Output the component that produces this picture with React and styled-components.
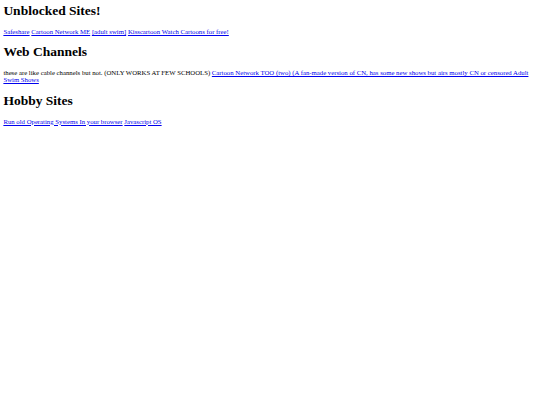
import React from "react";
import styled, { createGlobalStyle } from "styled-components";

// The page is drawn at 0.421875 of a 1280px-wide layout.
const S = 0.421875;
const px = (v) => `${v * S}px`;

const Global = createGlobalStyle`
  html, body { background: #fff; }
  body {
    margin: ${px(8)};
    font-family: "Liberation Serif", "Times New Roman", serif;
    font-size: ${px(16)};
    color: #000;
  }
`;

const Heading = styled.h1`
  font-size: ${px(32)};
  font-weight: bold;
  margin: ${(p) => (p.$first ? 0 : px(21.44))} 0 ${px(21.44)};
`;

const Para = styled.p`
  margin: ${px(16)} 0;
`;

const Link = styled.a`
  color: #0000ee;
  text-decoration: underline;
`;

const sections = [
  {
    title: "Unblocked Sites!",
    intro: null,
    links: [
      "Safeshare",
      "Cartoon Network ME",
      "[adult swim]",
      "Kisscartoon Watch Cartoons for free!",
    ],
  },
  {
    title: "Web Channels",
    intro: "these are like cable channels but not. (ONLY WORKS AT FEW SCHOOLS)",
    links: [
      "Cartoon Network TOO (two) (A fan-made version of CN, has some new shows but airs mostly CN or censored Adult Swim Shows",
    ],
  },
  {
    title: "Hobby Sites",
    intro: null,
    links: ["Run old Operating Systems In your browser", "Javascript OS"],
  },
];

export default function App() {
  return (
    <>
      <Global />
      {sections.map((s, i) => (
        <React.Fragment key={s.title}>
          <Heading $first={i === 0}>{s.title}</Heading>
          <Para>
            {s.intro && <>{s.intro} </>}
            {s.links.map((l, j) => (
              <React.Fragment key={l}>
                {j > 0 && " "}
                <Link href="#">{l}</Link>
              </React.Fragment>
            ))}
          </Para>
        </React.Fragment>
      ))}
    </>
  );
}
